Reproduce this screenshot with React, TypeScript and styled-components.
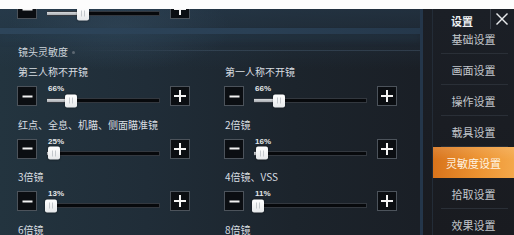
import React from "react";
import styled, { createGlobalStyle } from "styled-components";

const Global = createGlobalStyle`
  html, body { margin: 0; padding: 0; background: #ffffff; }
  body { width: 514px; height: 235px; overflow: hidden; font-family: "Noto Sans CJK SC", "Noto Sans", sans-serif; }
`;

const Page = styled.div`
  width: 514px;
  height: 235px;
  display: flex;
  flex-direction: column;
  overflow: hidden;
`;

const TopStrip = styled.div`
  height: 9px;
  flex: none;
  background: #fdfdfd;
`;

const Main = styled.div`
  flex: 1;
  min-height: 0;
  display: flex;
`;

const Content = styled.div`
  width: 420px;
  flex: none;
  padding-left: 17px;
  box-sizing: border-box;
  display: flex;
  flex-direction: column;
  overflow: hidden;
  background:
    radial-gradient(ellipse 160px 60px at 120px 20px, rgba(70, 100, 125, 0.25), transparent 70%),
    linear-gradient(180deg, rgba(40, 62, 82, 0.55) 0px, rgba(0, 0, 0, 0) 60px),
    linear-gradient(90deg, #23343f 0%, #202d38 35%, #1c242c 70%, #1a1f26 100%);
`;

const Band = styled.div`
  height: 6px;
  margin: 9px 0 0 -17px;
  flex: none;
  background: linear-gradient(90deg, #2d455a, #2a4055 60%, #25384b);
  box-shadow: 0 6px 6px rgba(40, 62, 84, 0.35);
`;

const SectionHeader = styled.div`
  display: flex;
  align-items: center;
  gap: 4px;
  margin-top: 12px;
  height: 12px;
  font-size: 10px;
  line-height: 12px;
  color: #cfd6dc;
  padding-left: 1px;
`;

const Dot = styled.span`
  width: 3px;
  height: 3px;
  border-radius: 50%;
  background: #5d6872;
`;

const HeaderLine = styled.span`
  flex: 1;
  height: 1px;
  margin-top: -4px;
  background: linear-gradient(90deg, rgba(70, 90, 110, 0), rgba(70, 90, 110, 0.45) 40%);
`;

const Grid = styled.div`
  display: grid;
  grid-template-columns: 173px 173px;
  column-gap: 34px;
  row-gap: 12.5px;
  margin-top: 8px;
`;

const Setting = styled.div`
  display: flex;
  flex-direction: column;
`;

const SettingLabel = styled.div`
  font-size: 10px;
  line-height: 12px;
  height: 12px;
  color: #d9dee2;
  white-space: nowrap;
  margin-bottom: 8px;
  padding-left: 1px;
`;

const ControlRow = styled.div<{ $offset?: number }>`
  display: flex;
  align-items: flex-start;
  gap: 10px;
  width: 173px;
  height: 20px;
  flex: none;
  margin-top: ${(p) => p.$offset ?? 0}px;
`;

const StepButton = styled.div`
  width: 18px;
  height: 18px;
  flex: none;
  background: #0b0e12;
  border: 1px solid #4c535b;
  display: flex;
  align-items: center;
  justify-content: center;
`;

const SliderWrap = styled.div`
  flex: 1;
  display: flex;
  flex-direction: column;
  position: relative;
`;

const Percent = styled.div`
  font-family: "Liberation Sans", "Noto Sans", sans-serif;
  font-size: 8px;
  font-weight: 700;
  line-height: 8px;
  height: 8px;
  margin-top: -1px;
  color: #e4e6e8;
  padding-left: 1px;
`;

const Track = styled.div<{ $bare?: boolean }>`
  position: relative;
  margin-top: ${(p) => (p.$bare ? 12 : 5)}px;
  height: 3px;
  background: #07090c;
  border: 1px solid #33383f;
  border-left: none;
`;

const Fill = styled.div`
  height: 100%;
  background: linear-gradient(180deg, #d6d9dc, #a9adb2);
`;

const Thumb = styled.div`
  position: absolute;
  top: 50%;
  width: 12px;
  height: 13px;
  transform: translate(-50%, -50%);
  border-radius: 2px;
  background: linear-gradient(180deg, #ffffff, #e6e8ea);
  box-shadow: 0 0 2px rgba(0, 0, 0, 0.5);
  display: flex;
  align-items: center;
  justify-content: center;
  gap: 2px;
`;

const Grip = styled.span`
  width: 1px;
  height: 6px;
  background: #c4c8cc;
`;

const Sidebar = styled.div`
  flex: 1;
  display: flex;
  border-left: 3px solid #24364a;
  background: linear-gradient(180deg, #1b1f26, #191b20);
`;

const SideInner = styled.div`
  flex: 1;
  margin-left: 9px;
  border-left: 1px solid #232c37;
  display: flex;
  flex-direction: column;
`;

const SideHeader = styled.div`
  height: 14px;
  flex: none;
  display: flex;
  justify-content: flex-end;
  align-items: flex-start;
  position: relative;
  z-index: 1;
`;

const SideTitle = styled.div`
  font-size: 11px;
  font-weight: 700;
  line-height: 14px;
  color: #eef0f2;
  margin-top: 5px;
  margin-right: 17px;
`;

const CloseBox = styled.div`
  width: 22px;
  height: 20px;
  border-left: 1px solid #3a4049;
  display: flex;
  align-items: center;
  justify-content: center;
  margin-right: 1px;
`;

const SideItem = styled.div<{ $active?: boolean }>`
  height: 31px;
  flex: none;
  display: flex;
  align-items: center;
  justify-content: center;
  font-size: 11px;
  color: ${(p) => (p.$active ? "#fff4e2" : "#c3c7cc")};
  position: relative;
  background: ${(p) =>
    p.$active
      ? "linear-gradient(180deg, rgba(255,255,255,0.12), rgba(255,255,255,0) 40%), linear-gradient(90deg, #d8731b, #ec9230 55%, #f4a84a)"
      : "transparent"};
  &::after {
    content: "";
    position: absolute;
    left: 8px;
    right: 6px;
    bottom: 0;
    height: 1px;
    background: ${(p) => (p.$active ? "transparent" : "#2a2f37")};
  }
`;

const Minus = () => (
  <svg width="11" height="11" viewBox="0 0 11 11">
    <line x1="0.5" y1="5.5" x2="10.5" y2="5.5" stroke="#f2f2f2" strokeWidth="2" />
  </svg>
);

const Plus = () => (
  <svg width="12" height="12" viewBox="0 0 12 12">
    <line x1="0" y1="6" x2="12" y2="6" stroke="#f4f4f4" strokeWidth="2" />
    <line x1="6" y1="0" x2="6" y2="12" stroke="#f4f4f4" strokeWidth="2" />
  </svg>
);

const Close = () => (
  <svg width="12" height="12" viewBox="0 0 12 12">
    <line x1="0.5" y1="0.5" x2="11.5" y2="11.5" stroke="#e8eaec" strokeWidth="1.4" />
    <line x1="11.5" y1="0.5" x2="0.5" y2="11.5" stroke="#e8eaec" strokeWidth="1.4" />
  </svg>
);

type SliderProps = { value?: number; pos: number; offset?: number };

const SliderControl = ({ value, pos, offset }: SliderProps) => (
  <ControlRow $offset={offset}>
    <StepButton>
      <Minus />
    </StepButton>
    <SliderWrap>
      {value !== undefined && <Percent>{value}%</Percent>}
      <Track $bare={value === undefined}>
        <Fill style={{ width: `${pos * 100}%` }} />
        <Thumb style={{ left: `${pos * 100}%` }}>
          <Grip />
          <Grip />
        </Thumb>
      </Track>
    </SliderWrap>
    <StepButton>
      <Plus />
    </StepButton>
  </ControlRow>
);

const settings: { label: string; value?: number; pos: number }[] = [
  { label: "第三人称不开镜", value: 66, pos: 0.21 },
  { label: "第一人称不开镜", value: 66, pos: 0.225 },
  { label: "红点、全息、机瞄、侧面瞄准镜", value: 25, pos: 0.06 },
  { label: "2倍镜", value: 16, pos: 0.07 },
  { label: "3倍镜", value: 13, pos: 0.04 },
  { label: "4倍镜、VSS", value: 11, pos: 0.04 },
  { label: "6倍镜", pos: 0.03 },
  { label: "8倍镜", pos: 0.03 },
];

const menu = ["基础设置", "画面设置", "操作设置", "载具设置", "灵敏度设置", "拾取设置", "效果设置"];

export default function App() {
  return (
    <>
      <Global />
      <Page>
        <TopStrip />
        <Main>
          <Content>
            <SliderControl pos={0.32} offset={-10} />
            <Band />
            <SectionHeader>
              镜头灵敏度
              <Dot />
              <HeaderLine />
            </SectionHeader>
            <Grid>
              {settings.map((s) => (
                <Setting key={s.label}>
                  <SettingLabel>{s.label}</SettingLabel>
                  <SliderControl value={s.value} pos={s.pos} />
                </Setting>
              ))}
            </Grid>
          </Content>
          <Sidebar>
            <SideInner>
              <SideHeader>
                <SideTitle>设置</SideTitle>
                <CloseBox>
                  <Close />
                </CloseBox>
              </SideHeader>
              {menu.map((m) => (
                <SideItem key={m} $active={m === "灵敏度设置"}>
                  {m}
                </SideItem>
              ))}
            </SideInner>
          </Sidebar>
        </Main>
      </Page>
    </>
  );
}
